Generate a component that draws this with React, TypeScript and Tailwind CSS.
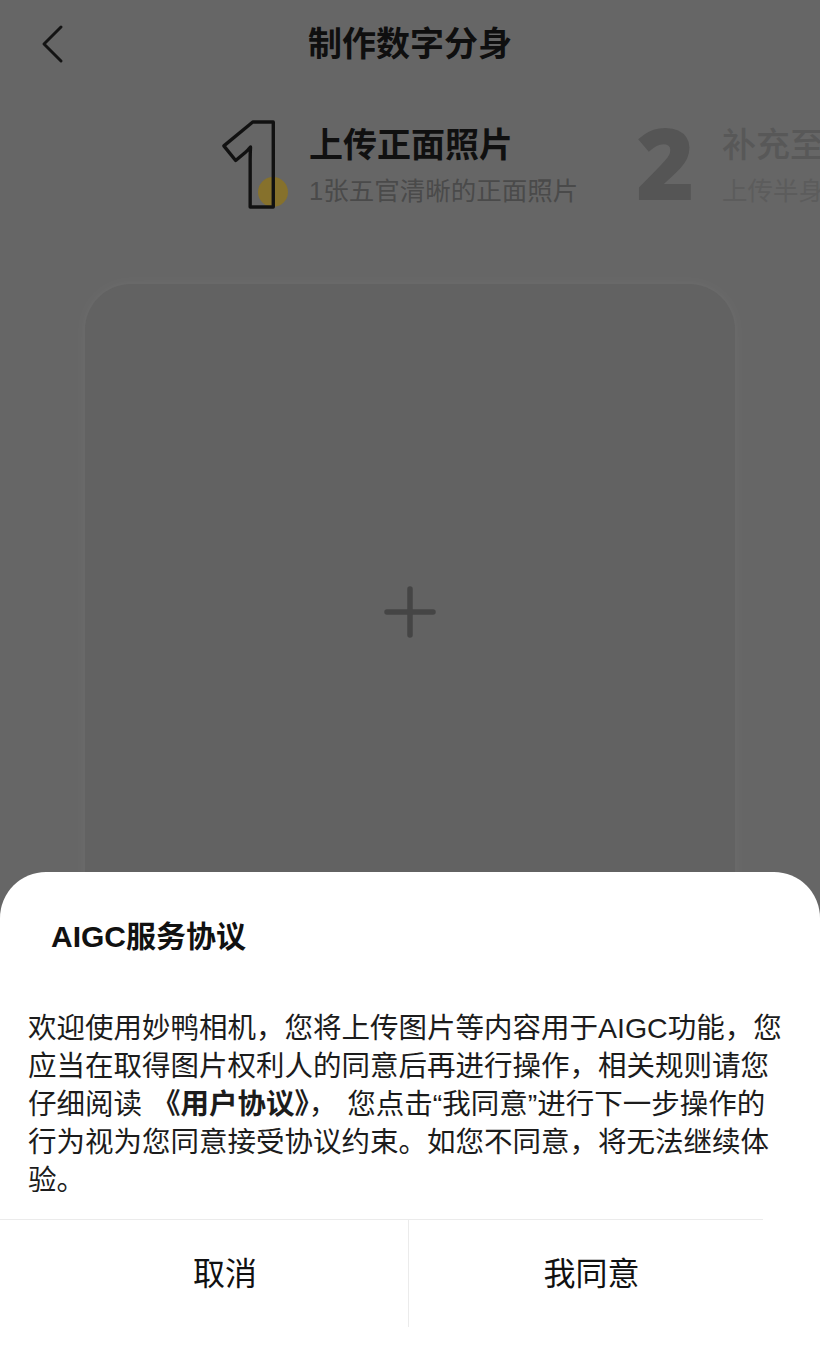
import React from 'react';

function StepNumber({ n, filled }: { n: string; filled?: boolean }) {
  return (
    <svg width="68" height="96" viewBox="0 0 68 96" className="block overflow-visible">
      <text
        x={filled ? 6 : -3}
        y={filled ? 82 : 89}
        fontSize={filled ? 100 : 118}
        fontFamily="'Open Sans', sans-serif"
        fontWeight={800}
        fill={filled ? '#555555' : 'none'}
        stroke={filled ? 'none' : '#111111'}
        strokeWidth={3.4}
        strokeLinejoin="round"
      >
        {n}
      </text>
    </svg>
  );
}

export default function App() {
  return (
    <div className="relative h-[1356px] w-full overflow-hidden bg-[#666666] font-['Liberation_Sans','Noto_Sans_CJK_SC',sans-serif]">
      {/* Header */}
      <div className="relative flex h-[88px] items-center justify-center">
        <button className="absolute left-[40px] top-[24px] p-0">
          <svg width="26" height="40" viewBox="0 0 26 40" fill="none">
            <path d="M21 3 L4 20 L21 37" stroke="#141414" strokeWidth="3" strokeLinecap="round" strokeLinejoin="round" />
          </svg>
        </button>
        <h1 className="text-[34px] font-bold leading-none text-[#0f0f0f]">制作数字分身</h1>
      </div>

      {/* Steps */}
      <div className="mt-[30px] flex items-start whitespace-nowrap pl-[222px]">
        <div className="relative h-[96px] w-[68px] shrink-0">
          <div className="absolute left-[36px] top-[59px] h-[30px] w-[30px] rounded-full bg-[#86712c]" />
          <div className="absolute inset-0">
            <StepNumber n="1" />
          </div>
        </div>
        <div className="ml-[19px] mt-[7px] w-[321px] shrink-0">
          <div className="text-[34px] font-bold leading-[40px] text-[#101010]">上传正面照片</div>
          <div className="mt-[10px] text-[25.5px] leading-[32px] text-[#4a4a4a]">1张五官清晰的正面照片</div>
        </div>
        <div className="h-[96px] w-[68px] shrink-0">
          <StepNumber n="2" filled />
        </div>
        <div className="ml-[24px] mt-[7px] shrink-0">
          <div className="text-[34px] font-medium leading-[40px] text-[#585858]">补充至少5张照片</div>
          <div className="mt-[10px] text-[25.5px] leading-[32px] text-[#5c5c5c]">上传半身或全身照片</div>
        </div>
      </div>

      {/* Upload card */}
      <div className="mx-auto mt-[70px] flex h-[1040px] w-[650px] justify-center rounded-[46px] bg-[#626262] shadow-[0_0_14px_rgba(255,255,255,0.05)]">
        <svg width="52" height="52" viewBox="0 0 52 52" className="mt-[302px]">
          <path d="M26 3 V49 M3 26 H49" stroke="#454545" strokeWidth="5.5" strokeLinecap="round" />
        </svg>
      </div>

      {/* Bottom sheet */}
      <div className="absolute inset-x-0 bottom-0 top-[872px] rounded-t-[46px] bg-white">
        <h2 className="pl-[51px] pt-[45px] text-[30px] font-bold leading-[40px] text-[#111111]">AIGC服务协议</h2>
        <p className="mt-[52px] whitespace-nowrap pl-[28px] text-[28.5px] leading-[38px] text-[#1c1c1c]">
          欢迎使用妙鸭相机，您将上传图片等内容用于AIGC功能，您
          <br />
          应当在取得图片权利人的同意后再进行操作，相关规则请您
          <br />
          仔细阅读<span className="ml-[10px] font-bold">《用户协议》</span>，<span className="ml-[10px]">您点击“我同意”进行下一步操作的</span>
          <br />
          行为视为您同意接受协议约束。如您不同意，将无法继续体
          <br />
          验。
        </p>
        <div className="mt-[20px] w-[763px] border-t border-[#ebebeb]" />
        <div className="ml-[42px] grid h-[107px] w-[732px] grid-cols-2">
          <button className="flex items-center justify-center text-[32px] text-[#111111]">取消</button>
          <button className="flex items-center justify-center border-l border-[#ebebeb] text-[32px] text-[#111111]">我同意</button>
        </div>
      </div>
    </div>
  );
}
